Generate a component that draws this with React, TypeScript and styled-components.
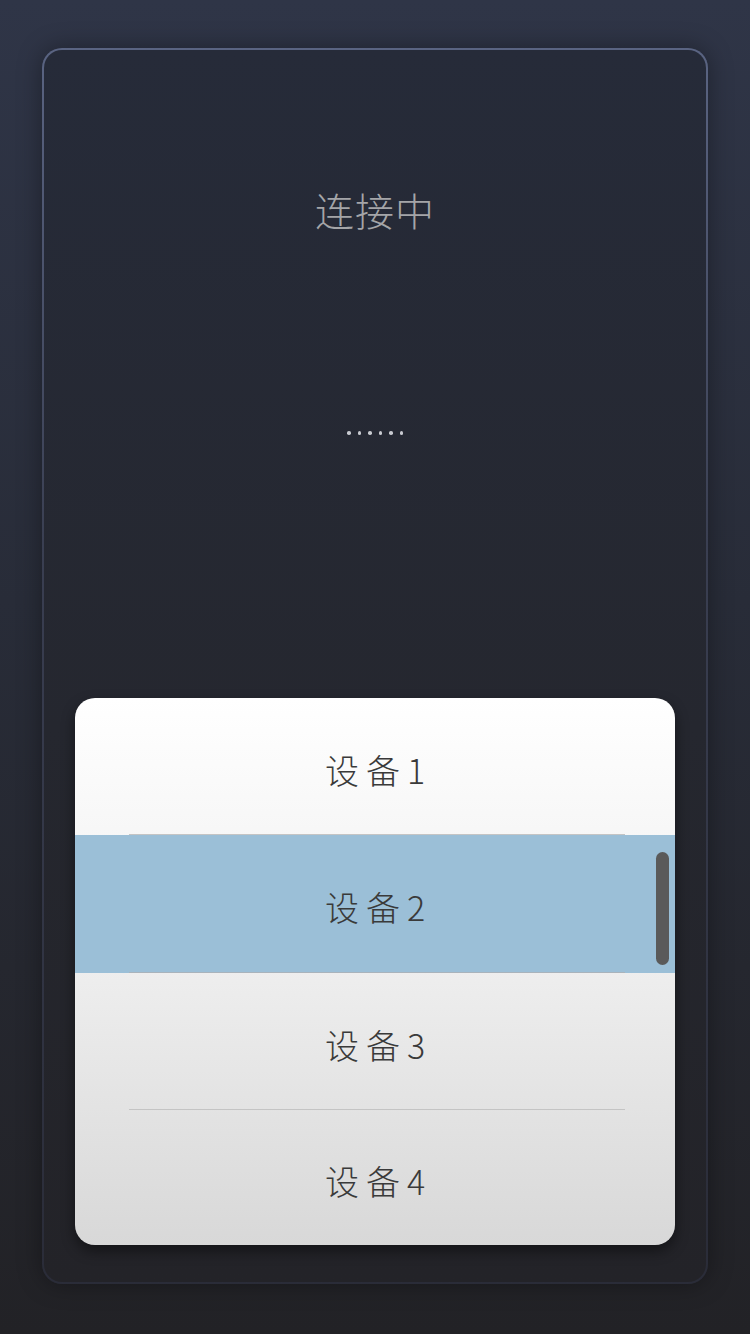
import React from 'react';
import styled, { createGlobalStyle } from 'styled-components';

const GlobalStyle = createGlobalStyle`
    html, body {
        margin: 0;
        padding: 0;
    }
    body {
        font-family: 'Noto Sans CJK SC', 'Noto Sans', sans-serif;
    }
`;

const Screen = styled.div`
    box-sizing: border-box;
    width: 750px;
    height: 1334px;
    padding: 48px 42px 50px;
    background: linear-gradient(180deg, #2f3547 0%, #282c38 45%, #222226 100%);
`;

const Panel = styled.div`
    box-sizing: border-box;
    height: 100%;
    border-radius: 20px;
    border: 2px solid transparent;
    background:
        linear-gradient(180deg, #262b39 0%, #25272f 55%, #232328 100%) padding-box,
        linear-gradient(180deg, #5a6482 0%, #3a3f52 40%, #2a2c38 100%) border-box;
    box-shadow: 0 0 24px rgba(0, 0, 0, 0.35);
    display: flex;
    flex-direction: column;
    align-items: center;
    padding: 134px 30px 37px;
`;

const Title = styled.div`
    font-size: 39px;
    font-weight: 300;
    line-height: 50px;
    color: #a4a5a8;
    letter-spacing: 1px;
`;

const Dots = styled.div`
    margin-top: 197px;
    display: flex;
    gap: 7px;
`;

const Dot = styled.span`
    width: 3.5px;
    height: 3.5px;
    border-radius: 50%;
    background: #c8cad0;
`;

const Spacer = styled.div`
    flex: 1;
`;

const Sheet = styled.div`
    position: relative;
    width: 600px;
    border-radius: 20px;
    overflow: hidden;
    background: linear-gradient(180deg, #ffffff 0%, #f0f0f0 45%, #d8d8d8 100%);
    box-shadow: 0 6px 14px rgba(0, 0, 0, 0.45);
    display: flex;
    flex-direction: column;
`;

const Row = styled.div<{ $active?: boolean; $divider?: boolean; $h: number }>`
    position: relative;
    box-sizing: border-box;
    height: ${p => p.$h}px;
    padding-top: 5px;
    display: flex;
    align-items: center;
    justify-content: center;
    font-size: 34px;
    font-weight: 300;
    letter-spacing: 7px;
    color: #3a3a3a;
    background: ${p => (p.$active ? '#9bbfd7' : 'transparent')};
    &::after {
        content: '';
        display: ${p => (p.$divider ? 'block' : 'none')};
        position: absolute;
        left: 54px;
        right: 50px;
        bottom: 0;
        height: 1px;
        background: ${p => (p.$active ? '#a9b3bb' : '#c4c4c4')};
    }
`;

const Label = styled.span`
    padding-left: 7px;
`;

const Scrollbar = styled.div`
    position: absolute;
    right: 6px;
    top: 154px;
    width: 13px;
    height: 113px;
    border-radius: 7px;
    background: #5a5a5a;
`;

const devices = ['设备1', '设备2', '设备3', '设备4'];
const heights = [137, 138, 137, 135];

export default function App() {
    return (
        <Screen>
            <GlobalStyle />
            <Panel>
                <Title>连接中</Title>
                <Dots>
                    {[0, 1, 2, 3, 4, 5].map(i => (
                        <Dot key={i} />
                    ))}
                </Dots>
                <Spacer />
                <Sheet>
                    {devices.map((d, i) => (
                        <Row key={d} $h={heights[i]} $active={i === 1} $divider={i < 3}>
                            <Label>{d}</Label>
                        </Row>
                    ))}
                    <Scrollbar />
                </Sheet>
            </Panel>
        </Screen>
    );
}
